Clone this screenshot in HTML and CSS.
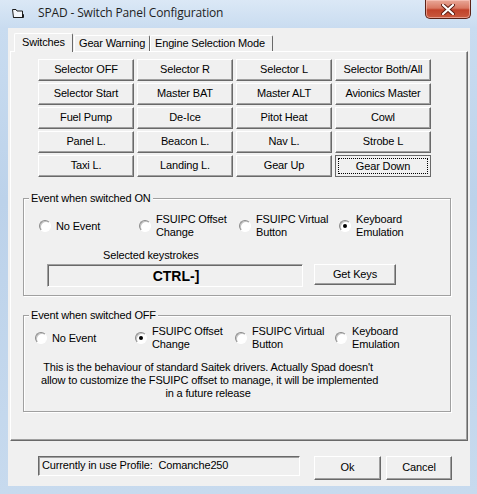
FILE: index.html
```html
<!DOCTYPE html>
<html>
<head>
<meta charset="utf-8">
<link rel="stylesheet" href="styles.css">
</head>
<body>
<div class="window">
  <div class="titlebar">
    <svg class="appicon" width="12" height="11" viewBox="0 0 12 11">
      <path d="M0.5 1.5 H4 L5 3 H10.5 V9.5 H1.5 Z" fill="#f4f7fb" stroke="#1c1c1c" stroke-width="1"/>
      <path d="M10.5 5.5 L11.5 6.5 V9.5 H1.5" fill="none" stroke="#1c1c1c" stroke-width="1"/>
    </svg>
    <span class="title">SPAD - Switch Panel Configuration</span>
    <div class="close">
      <svg width="14" height="11" viewBox="0 0 14 11">
        <path d="M2 1 L12 10 M12 1 L2 10" stroke="#5a1a10" stroke-width="4" stroke-linecap="round"/>
        <path d="M2 1 L12 10 M12 1 L2 10" stroke="#ffffff" stroke-width="2.2" stroke-linecap="round"/>
      </svg>
    </div>
  </div>
  <div class="client">
    <div class="tabs">
      <div class="tab active">Switches</div>
      <div class="tab">Gear Warning</div>
      <div class="tab">Engine Selection Mode</div>
    </div>
    <div class="panel">
      <div class="grid">
        <div class="btn">Selector OFF</div>
        <div class="btn">Selector R</div>
        <div class="btn">Selector L</div>
        <div class="btn">Selector Both/All</div>
        <div class="btn">Selector Start</div>
        <div class="btn">Master BAT</div>
        <div class="btn">Master ALT</div>
        <div class="btn">Avionics Master</div>
        <div class="btn">Fuel Pump</div>
        <div class="btn">De-Ice</div>
        <div class="btn">Pitot Heat</div>
        <div class="btn">Cowl</div>
        <div class="btn">Panel L.</div>
        <div class="btn">Beacon L.</div>
        <div class="btn">Nav L.</div>
        <div class="btn">Strobe L</div>
        <div class="btn">Taxi L.</div>
        <div class="btn">Landing L.</div>
        <div class="btn">Gear Up</div>
        <div class="btn pressed"><span class="focus">Gear Down</span></div>
      </div>

      <fieldset class="group group-on">
        <legend>Event when switched ON</legend>
        <div class="radios radios-on">
          <div class="opt"><span class="radio"></span><span class="opt-text">No Event</span></div>
          <div class="opt"><span class="radio"></span><span class="opt-text">FSUIPC Offset<br>Change</span></div>
          <div class="opt"><span class="radio"></span><span class="opt-text">FSUIPC Virtual<br>Button</span></div>
          <div class="opt"><span class="radio checked"></span><span class="opt-text">Keyboard<br>Emulation</span></div>
        </div>
        <div class="keys-label">Selected keystrokes</div>
        <div class="keys-row">
          <div class="keys-box">CTRL-]</div>
          <div class="btn getkeys">Get Keys</div>
        </div>
      </fieldset>

      <fieldset class="group group-off">
        <legend>Event when switched OFF</legend>
        <div class="radios radios-off">
          <div class="opt"><span class="radio"></span><span class="opt-text">No Event</span></div>
          <div class="opt"><span class="radio checked"></span><span class="opt-text">FSUIPC Offset<br>Change</span></div>
          <div class="opt"><span class="radio"></span><span class="opt-text">FSUIPC Virtual<br>Button</span></div>
          <div class="opt"><span class="radio"></span><span class="opt-text">Keyboard<br>Emulation</span></div>
        </div>
        <div class="desc">This is the behaviour of standard Saitek drivers. Actually Spad doesn't<br>allow to customize the FSUIPC offset to manage, it will be implemented<br>in a future release</div>
      </fieldset>
    </div>
    <div class="footer">
      <div class="status">Currently in use Profile:&nbsp; Comanche250</div>
      <div class="btn ok">Ok</div>
      <div class="btn cancel">Cancel</div>
    </div>
  </div>
</div>
</body>
</html>
```

FILE: styles.css
```css
* { box-sizing: border-box; }

html, body {
  margin: 0;
  padding: 0;
  background: #c4d8ed;
}

body {
  font-family: "Liberation Sans", Arial, sans-serif;
  font-size: 11px;
  letter-spacing: -0.15px;
  color: #000;
}

.window {
  width: 477px;
  height: 494px;
  background: linear-gradient(180deg, #dbe8f6 0px, #c9dcf0 28px, #bcd2ea 200px, #c7daee 494px);
  display: flex;
  flex-direction: column;
  overflow: hidden;
}

.titlebar {
  height: 28px;
  display: flex;
  align-items: flex-start;
  flex: none;
}

.appicon {
  margin: 8px 0 0 12px;
  flex: none;
}

.title {
  margin: 5px 0 0 14px;
  font-family: "Open Sans", "Liberation Sans", sans-serif;
  font-size: 12px;
  line-height: 16px;
  color: #1e1e1e;
  letter-spacing: -0.15px;
}

.close {
  margin-left: auto;
  margin-right: 6px;
  width: 46px;
  height: 19px;
  border: 1px solid #5b2217;
  border-top: none;
  border-radius: 0 0 5px 5px;
  background: linear-gradient(180deg, #e9a898 0%, #d97862 45%, #c1422a 55%, #c95a3f 100%);
  box-shadow: inset 0 0 0 1px rgba(255, 210, 200, 0.55);
  display: flex;
  align-items: center;
  justify-content: center;
}

.client {
  height: 458px;
  margin: 0 7px 0 8px;
  background: #f0f0f0;
  padding-top: 5px;
  flex: none;
}

.tabs {
  height: 18px;
  display: flex;
  align-items: flex-end;
  padding-left: 6px;
}

.tab {
  height: 16px;
  padding: 0 4px;
  border: 1px solid;
  border-color: #ffffff #696969 transparent #ffffff;
  border-bottom: none;
  border-radius: 2px 2px 0 0;
  line-height: 15px;
  white-space: nowrap;
  background: #f0f0f0;
}

.tab:nth-child(2) { width: 76px; margin-left: 1px; }
.tab:nth-child(3) { width: 123px; margin-left: 0; }

.tab.active {
  width: 59px;
  height: 19px;
  margin-bottom: -1px;
  padding: 0 0 0 7px;
  line-height: 17px;
  position: relative;
  z-index: 1;
}

.panel {
  height: 390px;
  margin: 0 2px;
  border: 1px solid;
  border-color: #ffffff #696969 #696969 #ffffff;
  box-shadow: inset -1px -1px 0 #a0a0a0;
  padding-top: 7px;
}

.grid {
  margin-left: 27px;
  display: grid;
  grid-template-columns: repeat(4, 96px);
  grid-auto-rows: 22px;
  column-gap: 3px;
  row-gap: 2px;
}

.btn {
  background: #f0f0f0;
  border: 1px solid;
  border-color: #ffffff #696969 #696969 #ffffff;
  box-shadow: inset -1px -1px 0 #a0a0a0;
  display: flex;
  align-items: center;
  justify-content: center;
  white-space: nowrap;
  line-height: 13px;
  padding-bottom: 1px;
}

.btn.pressed {
  border-color: #696969;
  box-shadow: none;
  padding: 2px;
}

.focus {
  flex: 1;
  align-self: stretch;
  border: 1px dotted #000;
  display: flex;
  align-items: center;
  justify-content: center;
}

.group {
  margin: 15px 0 0 12px;
  width: 428px;
  border: 1px solid #a0a0a0;
  box-shadow: 1px 1px 0 #ffffff, inset 1px 1px 0 #ffffff;
  padding: 0;
  min-width: 0;
}

.group legend {
  margin-left: 5px;
  padding: 0 2px;
  line-height: 13px;
  background: #f0f0f0;
}

.group-on { padding: 0 0 8px 0; }
.group-off { margin-top: 13px; padding: 0 0 11px 0; }

.radios {
  display: flex;
  height: 26px;
  align-items: center;
}

.radios-on { margin-top: 8px; padding-left: 15px; }
.radios-off { margin-top: 3px; padding-left: 11px; }

.opt {
  width: 100px;
  display: flex;
  align-items: center;
  gap: 5px;
  flex: none;
}

.opt-text {
  line-height: 13px;
  white-space: nowrap;
}

.radio {
  width: 12px;
  height: 12px;
  flex: none;
  border-radius: 50%;
  border: 1px solid;
  border-color: #8a8a8a #ffffff #ffffff #8a8a8a;
  background: #ffffff;
  box-shadow: inset 1px 1px 0 #c4c4c4;
  display: flex;
  align-items: center;
  justify-content: center;
}

.radio.checked::after {
  content: "";
  width: 4px;
  height: 4px;
  border-radius: 50%;
  background: #000;
}

.keys-label {
  margin: 10px 0 0 79px;
  line-height: 13px;
}

.keys-row {
  display: flex;
  align-items: flex-start;
  margin: 2px 0 0 23px;
}

.keys-box {
  width: 256px;
  height: 23px;
  border: 1px solid;
  border-color: #a0a0a0 #ffffff #ffffff #a0a0a0;
  box-shadow: inset 1px 1px 0 #696969;
  display: flex;
  align-items: center;
  justify-content: center;
  font-weight: bold;
  font-size: 14px;
  letter-spacing: 0;
  padding: 0 0 0 2px;
}

.getkeys {
  margin-left: 11px;
  width: 82px;
  height: 21px;
}

.desc {
  margin: 10px 0 0 17px;
  width: 334px;
  text-align: center;
  line-height: 13px;
  white-space: nowrap;
}

.footer {
  display: flex;
  align-items: flex-start;
  margin-top: 15px;
  padding-left: 30px;
}

.status {
  width: 262px;
  height: 20px;
  border: 1px solid;
  border-color: #696969 #ffffff #ffffff #696969;
  box-shadow: inset 1px 1px 0 #a0a0a0;
  padding-left: 3px;
  line-height: 17px;
  white-space: nowrap;
}

.ok {
  margin-left: 14px;
  width: 67px;
  height: 24px;
}

.cancel {
  margin-left: 5px;
  width: 66px;
  height: 24px;
}
```
